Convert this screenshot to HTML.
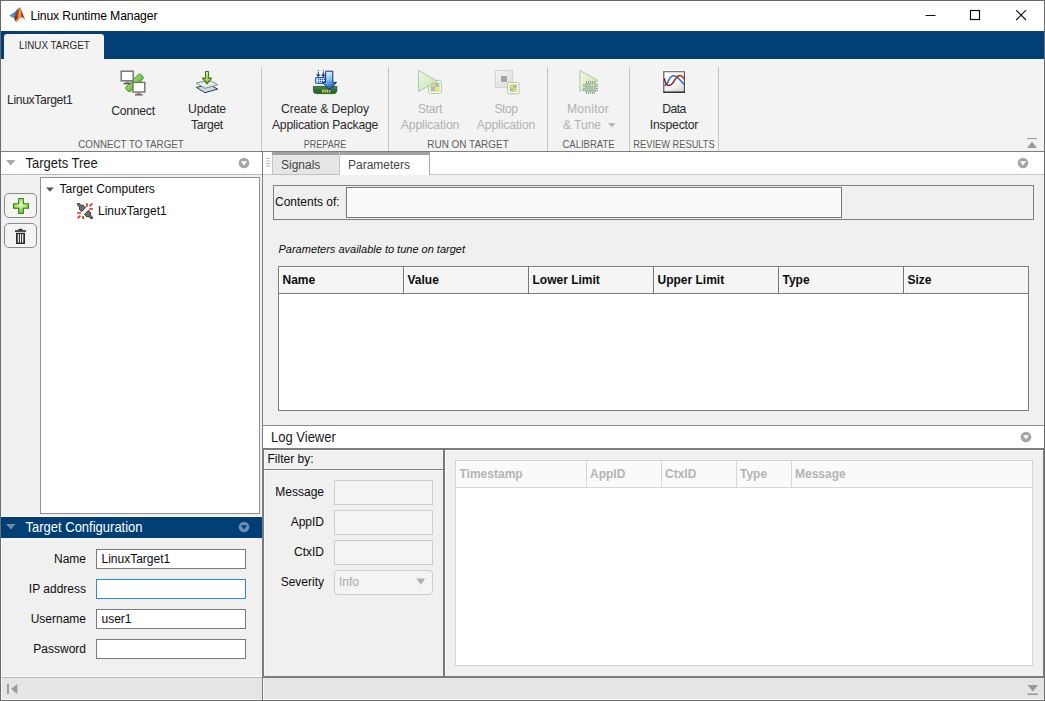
<!DOCTYPE html>
<html><head><meta charset="utf-8">
<style>
*{box-sizing:border-box;margin:0;padding:0}
html,body{width:1045px;height:701px;overflow:hidden;background:#f0f0f0}
body{font-family:"Liberation Sans",sans-serif;font-size:12px;color:#0c0c0c;position:relative}
.a{position:absolute}
.t{position:absolute;white-space:nowrap;line-height:14px}
.c{text-align:center}
.ts{font-size:12.2px;color:#2a2a2a;letter-spacing:-0.1px}
.dis{color:#b2b2b2}
.sec{font-size:10.6px;color:#5e5e5e}
.sep{position:absolute;top:67px;width:1px;height:84px;background:#c4c4c4}
.inp{position:absolute;background:#fff;border:1px solid #7a7a7a}
.dinp{position:absolute;background:#f4f4f4;border:1px solid #cdcdcd}
.lbl{position:absolute;white-space:nowrap;line-height:14px;text-align:right}
.th{position:absolute;font-weight:bold;white-space:nowrap;line-height:14px}
</style></head><body>
<!-- window frame -->
<div class="a" style="left:0;top:0;width:1045px;height:701px;background:#fff;border:1px solid #6b6b6b"></div>
<!-- title bar -->
<div class="a" id="titlebar" style="left:1px;top:1px;width:1043px;height:30px;background:#fff"></div>
<!-- blue band -->
<div class="a" style="left:1px;top:31px;width:1043px;height:28px;background:#004076"></div>
<div class="a" style="left:4px;top:34px;width:100px;height:25px;background:#f3f3f3;border-radius:3px 3px 0 0"></div>
<div class="t" style="left:18.5px;top:38px;font-size:11.3px;color:#2a2a2a;transform:scaleX(.872);transform-origin:0 0">LINUX TARGET</div>
<!-- toolstrip -->
<div class="a" style="left:1px;top:59px;width:1043px;height:92px;background:#f3f3f3"></div>
<div class="a" style="left:1px;top:151px;width:1043px;height:1px;background:#7f7f7f"></div>
<div class="sep" style="left:261px"></div>
<div class="sep" style="left:388px"></div>
<div class="sep" style="left:547px"></div>
<div class="sep" style="left:629px"></div>
<div class="sep" style="left:718px"></div>

<!-- TITLE -->
<svg class="a" style="left:0px;top:0px" width="30" height="28" viewBox="0 0 30 28">
<defs>
<linearGradient id="lgb" x1="0" y1="0" x2="1" y2="0"><stop offset="0" stop-color="#6cb4e8"/><stop offset=".55" stop-color="#3c84c8"/><stop offset="1" stop-color="#1c3c74"/></linearGradient>
<linearGradient id="lgd" x1="0" y1="0" x2="1" y2="0"><stop offset="0" stop-color="#74160c"/><stop offset=".6" stop-color="#b83818"/><stop offset="1" stop-color="#e06820"/></linearGradient>
<linearGradient id="lgc" x1="0" y1="0" x2="0" y2="1"><stop offset="0" stop-color="#d8581c"/><stop offset=".3" stop-color="#f4a834"/><stop offset="1" stop-color="#e8701c"/></linearGradient>
<linearGradient id="lgr" x1="0" y1="0" x2="1" y2="1"><stop offset="0" stop-color="#98240f"/><stop offset="1" stop-color="#d85030"/></linearGradient>
</defs>
<path d="M9.1 15.4 C10.8 14.3 12.8 13.6 14.2 12.6 C15.8 11.2 17.4 9.2 18.8 7.9 L17.6 11.6 L15.6 15.2 L14.2 18.1 C12.4 17.5 10.2 16.5 9.1 15.4 Z" fill="url(#lgb)"/>
<path d="M14.2 18.1 L15.4 15.2 L17.5 11 L19.3 7.7 L20 7.6 L19.6 12.2 L18.6 16.4 L17.2 20.2 L16.3 22.2 L15 20.4 Z" fill="url(#lgd)"/>
<path d="M19.4 7.8 L20.3 7.6 L21 10.2 L21.1 14 L20.4 17.6 L18.8 19.4 L17.2 21.6 L16.3 22.2 L17.8 17.4 L18.9 12.4 Z" fill="url(#lgc)"/>
<path d="M20.3 7.6 L21.5 10.4 L23.3 15 L25.1 19.7 L22.8 17.8 L21.3 17.2 L20.4 17.6 L21.1 14 L21 10.2 Z" fill="url(#lgr)"/>
<path d="M15.3 20.6 L16.3 22.2 L17.6 20.8 L16.4 19.4 Z" fill="#f4b42c"/>
</svg>
<div class="t" id="title" style="left:30.5px;top:9px;font-size:12.2px;color:#000;letter-spacing:-0.12px">Linux Runtime Manager</div>
<svg class="a" style="left:920px;top:5px" width="115" height="20" viewBox="0 0 115 20">
<path d="M5.5 10.5 H15.5" stroke="#111" stroke-width="1"/>
<rect x="50.5" y="5.5" width="9" height="9" fill="none" stroke="#111" stroke-width="1.2"/>
<path d="M96.2 5.2 L106 15 M106 5.2 L96.2 15" stroke="#111" stroke-width="1.1"/>
</svg>
<!-- TOOLSTRIP TEXT -->
<div class="t ts" style="left:7px;top:93px;letter-spacing:-0.36px">LinuxTarget1</div>
<div class="t ts c" style="left:93px;width:80px;top:104px;letter-spacing:-0.25px">Connect</div>
<div class="t ts c" style="left:167px;width:80px;top:101px;line-height:16px"><span style="letter-spacing:-0.25px">Update</span><br><span style="letter-spacing:-0.35px">Target</span></div>
<div class="t ts c" style="left:265px;width:120px;top:101px;line-height:16px">Create &amp; Deploy<br><span style="letter-spacing:-0.23px">Application Package</span></div>
<div class="t ts c dis" style="left:390px;width:80px;top:101px;line-height:16px"><span style="letter-spacing:-0.35px">Start</span><br>Application</div>
<div class="t ts c dis" style="left:466px;width:80px;top:101px;line-height:16px"><span style="letter-spacing:-0.5px">Stop</span><br>Application</div>
<div class="t ts c dis" style="left:548px;width:80px;top:101px;line-height:16px;letter-spacing:0.2px">Monitor</div>
<div class="t ts dis" style="left:563px;top:117px;line-height:16px">&amp; Tune</div>
<svg class="a" style="left:608px;top:123px" width="8" height="5"><path d="M0 0.3 H7.6 L3.8 4.2 Z" fill="#b4b4b4"/></svg>
<div class="t ts c" style="left:634px;width:80px;top:101px;line-height:16px"><span style="letter-spacing:-0.6px">Data</span><br><span style="letter-spacing:-0.18px">Inspector</span></div>
<div class="t sec c" style="left:61px;width:140px;top:137px;transform:scaleX(.922)">CONNECT TO TARGET</div>
<div class="t sec c" style="left:285px;width:80px;top:137px;transform:scaleX(.85)">PREPARE</div>
<div class="t sec c" style="left:408px;width:120px;top:137px;transform:scaleX(.94)">RUN ON TARGET</div>
<div class="t sec c" style="left:548px;width:81px;top:137px;transform:scaleX(.898)">CALIBRATE</div>
<div class="t sec c" style="left:624.3px;width:100px;top:137px;transform:scaleX(.878)">REVIEW RESULTS</div>
<svg class="a" style="left:1026px;top:138px" width="12" height="12"><path d="M1 0.5 H11" stroke="#9a9a9a" stroke-width="1.2"/><path d="M6 3.5 L11 10 H1 Z" fill="#9a9a9a"/></svg>
<!-- ICONS -->
<!-- connect -->
<svg class="a" style="left:119px;top:69px" width="28" height="28" viewBox="119 69 28 28">
<defs><linearGradient id="gp" x1="0" y1="0" x2="0" y2="1"><stop offset="0" stop-color="#9cdc6c"/><stop offset="1" stop-color="#68b838"/></linearGradient></defs>
<rect x="-10.3" y="-3.1" width="20.6" height="6.2" rx="1.7" transform="translate(134.5 82.9) rotate(-45)" fill="url(#gp)" stroke="#54a42c" stroke-width="1"/>
<rect x="121.2" y="71.2" width="12" height="9.6" fill="#fff" stroke="#707070" stroke-width="1.4"/>
<rect x="125.4" y="81.4" width="4" height="1.7" fill="#8c8c8c"/><rect x="123.4" y="83" width="7.2" height="1.3" fill="#5a5a5a"/>
<rect x="133" y="82.4" width="11.8" height="9.6" fill="#fff" stroke="#707070" stroke-width="1.4"/>
<rect x="136.6" y="92.6" width="4.2" height="1.7" fill="#8c8c8c"/><rect x="135" y="94.2" width="7.7" height="1.3" fill="#5a5a5a"/>
</svg>
<!-- update -->
<svg class="a" style="left:194px;top:69px" width="27" height="27" viewBox="194 69 27 27">
<defs><linearGradient id="ga" x1="0" y1="0" x2="0" y2="1"><stop offset="0" stop-color="#ffffff"/><stop offset=".5" stop-color="#c4ec84"/><stop offset="1" stop-color="#64a41c"/></linearGradient></defs>
<path d="M196.3 87.4 L209 84.6 L217.7 89.1 L205 92.7 Z" fill="#ccdae2" stroke="#2c4444" stroke-width="1" stroke-linejoin="round"/>
<path d="M196.3 83 L209 80.2 L217.7 84.7 L205 88.3 Z" fill="#e8eef2" stroke="#6c8484" stroke-width="0.9" stroke-linejoin="round"/>
<path d="M205.6 71.5 H208.4 V78.2 H211.4 L207 83.8 L202.6 78.2 H205.6 Z" fill="url(#ga)" stroke="#4c7410" stroke-width="1.2" stroke-linejoin="round"/>
</svg>
<!-- create & deploy -->
<svg class="a" style="left:312px;top:69px" width="27" height="27" viewBox="312 69 27 27">
<defs><linearGradient id="gb" x1="0" y1="0" x2="0.25" y2="1"><stop offset="0" stop-color="#f2fbff"/><stop offset=".5" stop-color="#84ccec"/><stop offset="1" stop-color="#1c54b0"/></linearGradient>
<linearGradient id="gg" x1="0" y1="0" x2="0" y2="1"><stop offset="0" stop-color="#3c8c3c"/><stop offset="1" stop-color="#1e5e24"/></linearGradient></defs>
<path d="M313.4 86.4 H336.8 V90.4 Q336.8 93.6 333.4 93.6 H316.8 Q313.4 93.6 313.4 90.4 Z" fill="url(#gg)" stroke="#1c4e20" stroke-width="0.8"/>
<rect x="322" y="89.6" width="1.5" height="3" fill="#ecc868"/><rect x="324.3" y="89.6" width="1.5" height="3" fill="#e8b858"/><rect x="326.6" y="89.6" width="1.5" height="3" fill="#ecc868"/><rect x="328.9" y="89.6" width="1.5" height="3" fill="#e8b858"/>
<rect x="315.4" y="77.6" width="10.6" height="5.8" rx="1.6" fill="#d4ecfc" stroke="#2458a8" stroke-width="1.1"/>
<rect x="318" y="79" width="1.1" height="1.1" fill="#1c3c8c"/><rect x="320" y="79" width="1.1" height="1.1" fill="#1c3c8c"/><rect x="322" y="79" width="1.1" height="1.1" fill="#1c3c8c"/><rect x="324" y="79" width="1.1" height="1.1" fill="#1c3c8c"/><rect x="318" y="81" width="1.1" height="1.1" fill="#1c3c8c"/><rect x="320" y="81" width="1.1" height="1.1" fill="#1c3c8c"/><rect x="322" y="81" width="1.1" height="1.1" fill="#1c3c8c"/><rect x="324" y="81" width="1.1" height="1.1" fill="#1c3c8c"/>
<rect x="317.7" y="70.2" width="1.1" height="1.1" fill="#1c3c7c"/><rect x="317.7" y="72.2" width="1.1" height="3" fill="#1c3c7c"/><path d="M316 74.4 H320.5 L318.25 77.2 Z" fill="#1c3c7c"/>
<rect x="322.8" y="70.2" width="1.1" height="1.1" fill="#1c3c7c"/><rect x="322.8" y="72.2" width="1.1" height="3" fill="#1c3c7c"/><path d="M321.1 74.4 H325.6 L323.35 77.2 Z" fill="#1c3c7c"/>
<path d="M325.6 71.2 H332.8 V82.4 H336.6 L329.4 90 L322.4 82.4 H325.6 Z" fill="url(#gb)" stroke="#1c2c80" stroke-width="1" stroke-linejoin="round"/>
</svg>
<!-- start -->
<svg class="a" style="left:416px;top:68px" width="28" height="28" viewBox="416 68 28 28">
<defs><linearGradient id="gs" x1="0" y1="0" x2="1" y2="1"><stop offset="0" stop-color="#eef7e6"/><stop offset="1" stop-color="#c8e2ac"/></linearGradient></defs>

<rect x="428.4" y="80.4" width="13" height="13" rx="2" fill="#fbfdf8" stroke="#a4cc9c" stroke-width="1"/>
<rect x="430.4" y="82.4" width="9" height="9" fill="#a8c0ac"/>
<rect x="430.4" y="82.4" width="4.5" height="4.5" fill="#f0cc84"/><rect x="434.9" y="86.9" width="4.5" height="4.5" fill="#f2de84"/>
<path d="M418.6 70.4 L437 81 L418.6 91.6 Z" fill="url(#gs)" stroke="#a8cca0" stroke-width="1" stroke-linejoin="round"/>
</svg>
<!-- stop -->
<svg class="a" style="left:493px;top:68px" width="28" height="28" viewBox="493 68 28 28">
<defs><linearGradient id="gq" x1="0" y1="0" x2="1" y2="1"><stop offset="0" stop-color="#f4f4f4"/><stop offset="1" stop-color="#dcdcdc"/></linearGradient></defs>
<rect x="495.4" y="70.4" width="17.2" height="17.2" fill="url(#gq)" stroke="#d2d2d2" stroke-width="1"/>
<rect x="501" y="76" width="6" height="6" fill="#a4a4a4"/>
<rect x="507.6" y="82.4" width="11.4" height="11.4" rx="1.6" fill="#fbfdf8" stroke="#a4cc9c" stroke-width="1"/>
<rect x="509.7" y="84.5" width="7.2" height="7.2" fill="#a8c4a0"/>
<rect x="509.7" y="84.5" width="3.6" height="3.6" fill="#ecd478"/><rect x="513.3" y="88.1" width="3.6" height="3.6" fill="#ecd478"/>
</svg>
<!-- monitor & tune -->
<svg class="a" style="left:577px;top:68px" width="24" height="28" viewBox="577 68 24 28">
<defs><linearGradient id="gm" x1="0" y1="0" x2="1" y2="0.6"><stop offset="0" stop-color="#f2f8ea"/><stop offset="1" stop-color="#cfe6b0"/></linearGradient></defs>
<path d="M579.9 70.6 L597.4 80.2 Q598 80.8 597.4 81.4 L579.9 91.2 Z" fill="url(#gm)" stroke="#aacca2" stroke-width="1" stroke-linejoin="round"/>
<g fill="#929c92" shape-rendering="crispEdges"><rect x="586" y="81" width="1" height="2"/><rect x="586" y="92" width="1" height="2"/><rect x="588" y="81" width="1" height="2"/><rect x="588" y="92" width="1" height="2"/><rect x="590" y="81" width="1" height="2"/><rect x="590" y="92" width="1" height="2"/><rect x="592" y="81" width="1" height="2"/><rect x="592" y="92" width="1" height="2"/><rect x="594" y="81" width="1" height="2"/><rect x="594" y="92" width="1" height="2"/><rect x="583" y="84" width="2" height="1"/><rect x="596" y="84" width="2" height="1"/><rect x="583" y="86" width="2" height="1"/><rect x="596" y="86" width="2" height="1"/><rect x="583" y="88" width="2" height="1"/><rect x="596" y="88" width="2" height="1"/><rect x="583" y="90" width="2" height="1"/><rect x="596" y="90" width="2" height="1"/></g>
<rect x="585" y="83" width="11" height="9" fill="#a8c4a8" shape-rendering="crispEdges"/>
<rect x="591" y="84" width="1" height="2" fill="#f4e4a0" shape-rendering="crispEdges"/><rect x="593" y="84" width="1" height="3" fill="#f4e4a0" shape-rendering="crispEdges"/>
</svg>
<!-- data inspector -->
<svg class="a" style="left:661px;top:69px" width="27" height="27" viewBox="661 69 27 27">
<defs><linearGradient id="gd" x1="0.3" y1="0" x2="0.8" y2="1"><stop offset="0" stop-color="#ffffff"/><stop offset=".55" stop-color="#fbfbfb"/><stop offset="1" stop-color="#d4d4d4"/></linearGradient><linearGradient id="gred" gradientUnits="userSpaceOnUse" x1="664" y1="0" x2="684" y2="0"><stop offset="0" stop-color="#8c1414"/><stop offset=".5" stop-color="#a81c1c"/><stop offset="1" stop-color="#dc3028"/></linearGradient></defs>
<rect x="662.6" y="70.4" width="23" height="23" fill="#fff" opacity=".9"/>
<rect x="663.8" y="71.6" width="20.6" height="20.6" fill="url(#gd)" stroke="#444" stroke-width="1.05"/>
<path d="M663.3 71.6 H685" stroke="#808080" stroke-width="1.05"/>
<path d="M663.3 92.2 H685" stroke="#1c1c1c" stroke-width="1.05"/>
<path d="M664.4 85.5 C667 85.7 668.2 80.4 670.2 77.6 C671.8 75.4 674.8 74.9 677 77 C679.6 79.4 682 82 683.9 84.3" fill="none" stroke="#1c6cc8" stroke-width="1.5"/>
<path d="M664.4 78.4 C664.8 82 666.6 85.6 669 85.5 C672.4 85.3 673.8 81.4 675.6 78.6 C677.2 76.2 679.6 75.1 681.2 75.7 C682.8 76.4 683.6 77.8 683.9 79.4" fill="none" stroke="url(#gred)" stroke-width="1.5"/>
</svg>
<!-- LEFT PANEL -->
<div class="a" style="left:1px;top:152px;width:261px;height:23px;background:#fff;border-bottom:1px solid #bdbdbd"></div>
<div class="a" style="left:1px;top:175px;width:261px;height:341px;background:#f0f0f0"></div>
<div class="a" style="left:40px;top:177px;width:220px;height:337px;background:#fff;border:1px solid #8f8f8f"></div>
<div class="a" style="left:1px;top:517px;width:261px;height:21px;background:#003f75"></div>
<div class="a" style="left:1px;top:538px;width:261px;height:139px;background:#f0f0f0"></div>
<div class="a" style="left:1px;top:676px;width:261px;height:1px;background:#fff"></div><div class="a" style="left:1px;top:677px;width:261px;height:23px;background:#e5e5e5;border-top:1px solid #b8b8b8;border-bottom:1px solid #fbfbfb;border-left:1px solid #fbfbfb"></div>
<div class="a" style="left:262px;top:152px;width:1px;height:548px;background:#7d7d7d"></div>

<!-- left panel content -->
<svg class="a" style="left:6px;top:160px" width="10" height="6"><path d="M0 0 H9.6 L4.8 5.6 Z" fill="#aaa"/></svg>
<div class="t" style="transform:scaleY(1.07);transform-origin:0 12px;left:25.5px;top:156px;font-size:13px;line-height:15px;color:#1a1a1a">Targets Tree</div>
<svg class="a" style="left:238px;top:157px" width="12" height="12"><circle cx="6" cy="6" r="5.3" fill="#a6a6a6"/><path d="M3 4.2 H9 L6 8.6 Z" fill="#fff"/></svg>
<div class="a" style="left:4px;top:193px;width:33px;height:25px;border:1px solid #8c8c8c;border-radius:5px;background:#f4f4f4"></div>
<div class="a" style="left:4px;top:223px;width:33px;height:25px;border:1px solid #8c8c8c;border-radius:5px;background:#f4f4f4"></div>
<svg class="a" style="left:12px;top:197px" width="18" height="18" viewBox="0 0 18 18">
<defs><radialGradient id="gpl" cx=".5" cy=".38" r=".62"><stop offset="0" stop-color="#f4fcdc"/><stop offset=".45" stop-color="#b8e470"/><stop offset="1" stop-color="#74bc2c"/></radialGradient></defs>
<path d="M6.7 1.5 H11.3 V6.7 H16.5 V11.3 H11.3 V16.5 H6.7 V11.3 H1.5 V6.7 H6.7 Z" fill="url(#gpl)" stroke="#2e8418" stroke-width="1.1" stroke-linejoin="round"/>
</svg>
<svg class="a" style="left:14px;top:228px" width="14" height="17" viewBox="14 228 14 17">
<rect x="18.6" y="228.8" width="3.8" height="1.6" fill="#2a2a2a"/>
<rect x="15" y="230.2" width="11" height="1.6" fill="#2a2a2a"/>
<rect x="16" y="232.8" width="9" height="11.2" fill="#2a2a2a"/>
<rect x="17.7" y="234" width="1.2" height="8.6" fill="#f6f6f6"/><rect x="19.9" y="234" width="1.2" height="8.6" fill="#f6f6f6"/><rect x="22.1" y="234" width="1.2" height="8.6" fill="#f6f6f6"/>
</svg>
<svg class="a" style="left:46px;top:186.6px" width="9" height="6"><path d="M0 0.4 H8 L4 4.8 Z" fill="#555"/></svg>
<div class="t" style="left:59.5px;top:181.5px">Target Computers</div>
<svg class="a" style="left:77px;top:203px" width="16" height="16" viewBox="0 0 16 16">
<path d="M0.4 0.5 H2.4 L4 2.3 H6.4 L8.6 4.6 L4.6 8.7 L2.5 6.5 V4 L0.4 1.8 Z" fill="#6c6c6c" stroke="#2c2c2c" stroke-width="0.9" stroke-linejoin="round"/>
<path d="M15.6 15.5 H13.6 L12 13.7 H9.6 L7.4 11.4 L11.4 7.3 L13.5 9.5 V12 L15.6 14.2 Z" fill="#6c6c6c" stroke="#2c2c2c" stroke-width="0.9" stroke-linejoin="round"/>
<path d="M9.9 0.3 V3.8 M12.6 3.2 L15.4 0.7 M12.2 6 H15.9 M0.1 10 H3.9 M0.7 15.2 L3.4 12.7 M6.1 12.9 V16" stroke="#dc2a1c" stroke-width="1.7"/>
</svg>
<div class="t" style="left:98px;top:203.5px">LinuxTarget1</div>
<!-- target configuration -->
<svg class="a" style="left:6px;top:524px" width="10" height="6"><path d="M0 0 H9.6 L4.8 5.6 Z" fill="#6c8cb0"/></svg>
<div class="t" style="transform:scaleY(1.07);transform-origin:0 12px;left:25.5px;top:520px;font-size:13px;line-height:15px;color:#fff">Target Configuration</div>
<svg class="a" style="left:238px;top:521px" width="12" height="12"><circle cx="6" cy="6" r="5.3" fill="#6c8cb0"/><path d="M3 4.2 H9 L6 8.6 Z" fill="#003f75"/></svg>
<div class="lbl" style="left:6px;width:80px;top:551.5px">Name</div>
<div class="lbl" style="left:6px;width:80px;top:581.5px">IP address</div>
<div class="lbl" style="left:6px;width:80px;top:611.5px">Username</div>
<div class="lbl" style="left:6px;width:80px;top:641.5px">Password</div>
<div class="inp" style="left:96px;top:549px;width:150px;height:20px"></div>
<div class="inp" style="left:96px;top:579px;width:150px;height:20px;border-color:#2c88e0"></div>
<div class="inp" style="left:96px;top:609px;width:150px;height:20px"></div>
<div class="inp" style="left:96px;top:639px;width:150px;height:20px"></div>
<div class="t" style="left:101.5px;top:551.5px">LinuxTarget1</div>
<div class="t" style="left:101.5px;top:611.5px">user1</div>
<svg class="a" style="left:6px;top:682px" width="13" height="13"><path d="M2 2 V12" stroke="#9a9a9a" stroke-width="1.9"/><path d="M11.3 2 V12 L5.1 7 Z" fill="#9a9a9a"/></svg>
<div class="a" style="left:1px;top:538px;width:1px;height:138px;background:#f9f9f9"></div>
<!-- RIGHT PANEL -->
<div class="a" style="left:263px;top:152px;width:781px;height:23px;background:#fff;border-bottom:1px solid #c8c8c8"></div>
<div class="a" style="left:263px;top:175px;width:781px;height:251px;background:#f0f0f0"></div>
<div class="a" style="left:263px;top:425px;width:781px;height:24px;background:#fff;border-top:1px solid #8c8c8c"></div>
<div class="a" style="left:263px;top:448px;width:781px;height:230px;background:#f0f0f0;border:2px solid #7d7d7d;border-left-width:1px;border-right-width:1px"></div>
<div class="a" style="left:263px;top:678px;width:781px;height:22px;background:#e5e5e5;border-bottom:1px solid #fbfbfb;border-left:1px solid #f6f6f6"></div>

<!-- right panel content -->
<svg class="a" style="left:266px;top:157px" width="5" height="11"><path d="M0 1.5 H4.4 M0 4 H4.4 M0 6.5 H4.4 M0 9 H4.4" stroke="#b8b8b8" stroke-width="1"/></svg>
<div class="a" style="left:272px;top:152px;width:68px;height:23px;background:#e6e6e6;border:1px solid #c2c2c2;border-top:none"></div>
<div class="a" style="left:340px;top:152px;width:90px;height:23px;background:#fff;border-right:1px solid #aaa"></div>
<div class="a" style="left:272px;top:152px;width:158px;height:3px;background:#a2a2a2"></div>
<div class="a" style="left:339px;top:152px;width:1px;height:3px;background:#c4c4c4"></div>
<div class="t" style="left:281px;top:157.5px;color:#444">Signals</div>
<div class="t" style="left:348px;top:157.5px;color:#444">Parameters</div>
<svg class="a" style="left:1017px;top:157px" width="12" height="12"><circle cx="6" cy="6" r="5.3" fill="#a6a6a6"/><path d="M3 4.2 H9 L6 8.6 Z" fill="#fff"/></svg>
<div class="a" style="left:273px;top:185px;width:761px;height:35px;border:1px solid #7e7e7e;background:#f0f0f0"></div>
<div class="a" style="left:346px;top:187px;width:496px;height:31px;border:1px solid #767676;background:#fafafa;box-shadow:inset 0 0 0 1px #fff"></div>
<div class="t" style="left:275px;top:195px">Contents of:</div>
<div class="t" style="left:278.5px;top:242px;font-style:italic;font-size:11px">Parameters available to tune on target</div>
<div class="a" style="left:278px;top:266px;width:751px;height:145px;border:1px solid #7c7c7c;background:#fff"></div>
<div class="a" style="left:279px;top:267px;width:749px;height:26px;background:#f5f5f5"></div>
<div class="a" style="left:279px;top:293px;width:749px;height:1px;background:#7c7c7c"></div>
<div class="a" style="left:279px;top:267px;width:749px;height:1px;background:#fdfdfd"></div><div class="a" style="left:279px;top:267px;width:1px;height:26px;background:#fdfdfd"></div><div class="a" style="left:404px;top:267px;width:1px;height:26px;background:#fdfdfd"></div><div class="a" style="left:529px;top:267px;width:1px;height:26px;background:#fdfdfd"></div><div class="a" style="left:654px;top:267px;width:1px;height:26px;background:#fdfdfd"></div><div class="a" style="left:779px;top:267px;width:1px;height:26px;background:#fdfdfd"></div><div class="a" style="left:904px;top:267px;width:1px;height:26px;background:#fdfdfd"></div>
<div class="a" style="left:403px;top:267px;width:1px;height:26px;background:#767676"></div>
<div class="a" style="left:528px;top:267px;width:1px;height:26px;background:#767676"></div>
<div class="a" style="left:653px;top:267px;width:1px;height:26px;background:#767676"></div>
<div class="a" style="left:778px;top:267px;width:1px;height:26px;background:#767676"></div>
<div class="a" style="left:903px;top:267px;width:1px;height:26px;background:#767676"></div>
<div class="th" style="left:282.5px;top:273px">Name</div>
<div class="th" style="left:407.5px;top:273px">Value</div>
<div class="th" style="left:532.5px;top:273px">Lower Limit</div>
<div class="th" style="left:657.5px;top:273px">Upper Limit</div>
<div class="th" style="left:782.5px;top:273px">Type</div>
<div class="th" style="left:907.5px;top:273px">Size</div>
<!-- log viewer -->
<div class="t" style="transform:scaleY(1.07);transform-origin:0 12px;left:271px;top:430px;font-size:13px;line-height:15px;color:#1a1a1a">Log Viewer</div>
<svg class="a" style="left:1020px;top:431px" width="12" height="12"><circle cx="6" cy="6" r="5.3" fill="#a6a6a6"/><path d="M3 4.2 H9 L6 8.6 Z" fill="#fff"/></svg>
<div class="a" style="left:443px;top:450px;width:2px;height:226px;background:#787878"></div>
<div class="a" style="left:264px;top:470px;width:179px;height:1px;background:#f7f7f7"></div><div class="a" style="left:264px;top:450px;width:1px;height:226px;background:#fafafa"></div><div class="a" style="left:265px;top:450px;width:178px;height:1px;background:#fafafa"></div><div class="a" style="left:445px;top:450px;width:1px;height:226px;background:#fafafa"></div><div class="a" style="left:446px;top:450px;width:597px;height:1px;background:#fafafa"></div>
<div class="a" style="left:264px;top:469px;width:179px;height:1px;background:#7d7d7d"></div>
<div class="t" style="left:267.5px;top:452px">Filter by:</div>
<div class="lbl" style="left:264px;width:60px;top:484.5px">Message</div>
<div class="lbl" style="left:264px;width:60px;top:514.5px">AppID</div>
<div class="lbl" style="left:264px;width:60px;top:544.5px">CtxID</div>
<div class="lbl" style="left:264px;width:60px;top:574.5px">Severity</div>
<div class="dinp" style="left:334px;top:480px;width:99px;height:25px"></div>
<div class="dinp" style="left:334px;top:510px;width:99px;height:25px"></div>
<div class="dinp" style="left:334px;top:540px;width:99px;height:25px"></div>
<div class="dinp" style="left:334px;top:570px;width:99px;height:25px;border-radius:4px"></div>
<div class="t" style="left:339px;top:574.5px;color:#aaa">Info</div>
<svg class="a" style="left:416px;top:578px" width="10" height="8"><path d="M0.5 0.5 H9.2 L4.8 6.8 Z" fill="#b0b0b0"/></svg>
<div class="a" style="left:455px;top:460px;width:578px;height:206px;border:1px solid #d2d2d2;background:#fff"></div>
<div class="a" style="left:456px;top:461px;width:576px;height:27px;background:#fafafa;border-bottom:1px solid #d6d6d6"></div>
<div class="a" style="left:586px;top:461px;width:1px;height:26px;background:#d6d6d6"></div>
<div class="a" style="left:661px;top:461px;width:1px;height:26px;background:#d6d6d6"></div>
<div class="a" style="left:736px;top:461px;width:1px;height:26px;background:#d6d6d6"></div>
<div class="a" style="left:791px;top:461px;width:1px;height:26px;background:#d6d6d6"></div>
<div class="th" style="left:459.5px;top:466.5px;color:#b4b4b4">Timestamp</div>
<div class="th" style="left:590px;top:466.5px;color:#b4b4b4">AppID</div>
<div class="th" style="left:665px;top:466.5px;color:#b4b4b4">CtxID</div>
<div class="th" style="left:740px;top:466.5px;color:#b4b4b4">Type</div>
<div class="th" style="left:795px;top:466.5px;color:#b4b4b4">Message</div>
<svg class="a" style="left:1027px;top:684px" width="12" height="12"><path d="M0.6 1 H11 L5.8 7.4 Z" fill="#9a9a9a"/><path d="M0.6 10.2 H11" stroke="#9a9a9a" stroke-width="1.5"/></svg>
</body></html>
